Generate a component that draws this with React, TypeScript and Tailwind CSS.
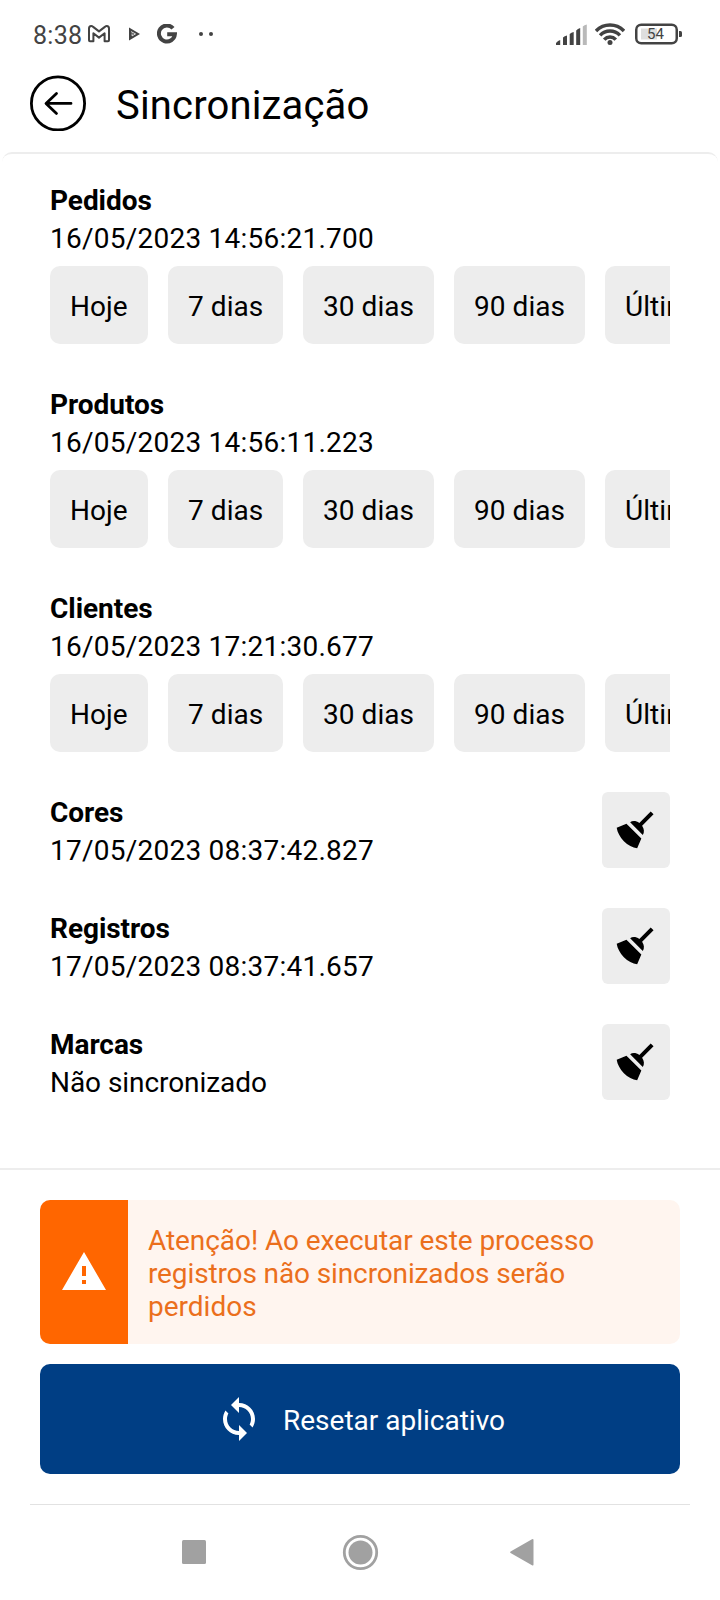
import type { ReactNode } from "react";

const periods = [
  { label: "Hoje", width: "w-[98px]" },
  { label: "7 dias", width: "w-[115px]" },
  { label: "30 dias", width: "w-[131px]" },
  { label: "90 dias", width: "w-[131px]" },
  { label: "Últimos", width: "w-[132px]" },
];

const periodSections = [
  { title: "Pedidos", date: "16/05/2023 14:56:21.700" },
  { title: "Produtos", date: "16/05/2023 14:56:11.223" },
  { title: "Clientes", date: "16/05/2023 17:21:30.677" },
];

const cleanSections = [
  { title: "Cores", date: "17/05/2023 08:37:42.827" },
  { title: "Registros", date: "17/05/2023 08:37:41.657" },
  { title: "Marcas", date: null },
];

function Icon({ children }: { children: ReactNode }) {
  return (
    <svg viewBox="0 0 24 24" className="size-12 shrink-0 fill-current">
      {children}
    </svg>
  );
}

function StatusBar() {
  return (
    <div className="flex h-[68px] shrink-0 items-center text-[#434343]">
      <span className="ml-[33px] w-[55px] pt-[3px] text-[25px] leading-[30px] tracking-[0.3px]">8:38</span>
      <svg viewBox="0 0 22 18" className="h-[18px] w-[22px] fill-none stroke-current" strokeWidth="2" strokeLinejoin="round">
        <path d="M1 3.500v11.800q0 1 1 1h3.400V8.300l5.600 4.300 5.600-4.300v8H20q1 0 1-1V3.500Q21 1 18.800 1q-.9 0-1.600.6L11 6.400 4.800 1.600Q4.100 1 3.200 1 1 1 1 3.500z" />
      </svg>
      <svg viewBox="0 0 12 14" className="ml-[18px] h-[14px] w-3">
        <path d="M1 .5l11 6.500L1 13.500z" className="fill-current" />
        <path d="M3 4.600l4.500 2.300-3.400 2V6.500" className="fill-none stroke-white" strokeWidth="0.8" />
      </svg>
      <svg viewBox="0 0 20 20" className="ml-[17px] size-5 fill-none stroke-current" strokeWidth="4">
        <path d="M16 4.300A8 8 0 1 0 17.900 10.200H10.200" />
      </svg>
      <span className="ml-[22px] size-[4px] rounded-full bg-current" />
      <span className="ml-[6px] size-[4px] rounded-full bg-current" />
      <svg viewBox="0 0 32 22" className="ml-auto h-[22px] w-8 fill-current">
        <path d="M0 22v-2q2-2.500 4.200-3v5zM7 22v-7.500q1.500-1.700 4-2V22zM13.700 22V11q1.500-1.700 4-2v13zM20.200 22V7.500q1.500-2 4-2.500v17z" />
        <path d="M26.800 22V3.500q1.500-1.500 4-2V22z" className="fill-[#b9b9b9]" />
      </svg>
      <svg viewBox="0 0 30 22" className="ml-[7px] h-[22px] w-[30px] fill-none stroke-current" strokeWidth="3.500">
        <path d="M1 8a19.500 19.500 0 0 1 28 0M5.100 12.400a13.500 13.500 0 0 1 19.800 0M9.200 16.600a8 8 0 0 1 11.600 0" />
        <circle cx="15" cy="19.500" r="2.500" className="fill-current stroke-none" />
      </svg>
      <div className="relative ml-[10px] mr-[38px] flex h-[22px] w-[47px] items-center pl-[12px]">
        <svg viewBox="0 0 47 22" className="absolute inset-0 h-[22px] w-[47px] fill-none">
          <rect x="1.250" y="1.750" width="40.500" height="18.500" rx="5" className="stroke-current" strokeWidth="2.500" />
          <path d="M6 5.500h16v11H6z" className="fill-[#dedede]" />
          <path d="M44 8h1.500q1.500 0 1.500 1.500v3q0 1.500-1.500 1.500H44z" className="fill-current" />
        </svg>
        <span className="relative text-[15px] leading-none">54</span>
      </div>
    </div>
  );
}

function Header() {
  return (
    <header className="flex h-[70px] shrink-0 items-center pl-[30px]">
      <svg viewBox="0 0 56 56" className="size-14 fill-none stroke-black" strokeWidth="2.800">
        <circle cx="28" cy="28.400" r="26.600" />
        <path d="M41 28.400H16.500M26.500 18.400L16 28.400l10.500 10" strokeLinecap="round" strokeLinejoin="round" />
      </svg>
      <h1 className="ml-[30px] pt-[6px] text-[40px] leading-[48px] tracking-[0.16px]">Sincronização</h1>
    </header>
  );
}

function Label({ title, date }: { title: string; date: string | null }) {
  return (
    <div className="pt-[2px] leading-[38px]">
      <h2 className="font-bold tracking-[-0.05px]">{title}</h2>
      {date ? (
        <p className="tracking-[0.24px]">{date}</p>
      ) : (
        <p className="tracking-[-0.06px]">Não sincronizado</p>
      )}
    </div>
  );
}

export default function App() {
  return (
    <div className="flex h-[1600px] w-[720px] flex-col overflow-hidden bg-white font-[Roboto,sans-serif] text-[28px] text-black">
      <StatusBar />
      <Header />
      <main className="mx-[2px] mt-[14px] flex h-[1016px] shrink-0 flex-col rounded-t-[10px] border-t-2 border-[#ededed] px-[48px] pt-[26px]">
        {periodSections.map((s) => (
          <section key={s.title} className="h-[204px]">
            <Label title={s.title} date={s.date} />
            <div className="mt-[8px] flex gap-5 overflow-hidden">
              {periods.map((p) => (
                <button
                  key={p.label}
                  className={`h-[78px] shrink-0 rounded-[10px] bg-[#ededed] pl-5 pt-[3px] text-left tracking-[0.06px] ${p.width}`}
                >
                  {p.label}
                </button>
              ))}
            </div>
          </section>
        ))}
        {cleanSections.map((s) => (
          <section key={s.title} className="flex h-[116px] items-start justify-between">
            <Label title={s.title} date={s.date} />
            <button className="flex h-[76px] w-[68px] items-center justify-center rounded-md bg-[#ededed]">
              <Icon>
                <path d="M19.360 2.720L20.780 4.140L15.060 9.850C16.130 11.390 16.280 13.240 15.380 14.440L9.060 8.120C10.260 7.220 12.110 7.370 13.650 8.440L19.360 2.720M5.930 17.570C3.920 15.560 2.690 13.160 2.350 10.920L7.230 8.830L14.670 16.270L12.580 21.150C10.340 20.810 7.940 19.580 5.930 17.570Z" />
              </Icon>
            </button>
          </section>
        ))}
      </main>
      <footer className="shrink-0 border-t-2 border-[#ededed] px-10 pt-[30px]">
        <div className="flex h-36 overflow-hidden rounded-[10px] bg-[#fff5ef]">
          <div className="flex w-[88px] items-center justify-center bg-[#ff6600] text-white">
            <Icon>
              <path d="M13 14H11V9H13M13 18H11V16H13M1 21H23L12 2L1 21Z" />
            </Icon>
          </div>
          <p className="flex-1 px-5 pt-[24px] leading-[33px] text-[#eb6f1c]">
            <span className="tracking-[-0.06px]">Atenção! Ao executar este processo </span>
            <span className="tracking-[-0.12px]">registros não sincronizados serão </span>
            perdidos
          </p>
        </div>
        <button className="mt-5 flex h-[110px] w-full items-center justify-center gap-5 rounded-[10px] bg-[#003e84] text-white">
          <Icon>
            <path d="M12 4V1L8 5l4 4V6c3.310 0 6 2.690 6 6 0 1.010-.25 1.970-.7 2.800l1.460 1.460C19.540 15.030 20 13.570 20 12c0-4.420-3.580-8-8-8zm0 14c-3.310 0-6-2.690-6-6 0-1.010.25-1.970.7-2.800L5.240 7.740C4.460 8.970 4 10.430 4 12c0 4.420 3.580 8 8 8v3l4-4-4-4v3z" />
          </Icon>
          <span className="pt-[3px]">Resetar aplicativo</span>
        </button>
      </footer>
      <nav className="mx-[30px] mt-[30px] flex h-[95px] shrink-0 items-center justify-center border-t border-[#e2e2e2]">
        <svg viewBox="0 0 660 40" className="h-10 w-[660px] fill-[#a1a1a1]">
          <rect x="152" y="8" width="24" height="24" rx="1.500" />
          <circle cx="330.500" cy="20.500" r="12" />
          <circle cx="330.500" cy="20.500" r="16.200" fill="none" className="stroke-[#a1a1a1]" strokeWidth="2.800" />
          <path d="M480.600 19.500L502 7.200q1.500-.7 1.500.8v24.500q0 1.500-1.500.8l-21.400-12.300q-1.200-.8 0-1.500z" />
        </svg>
      </nav>
    </div>
  );
}
